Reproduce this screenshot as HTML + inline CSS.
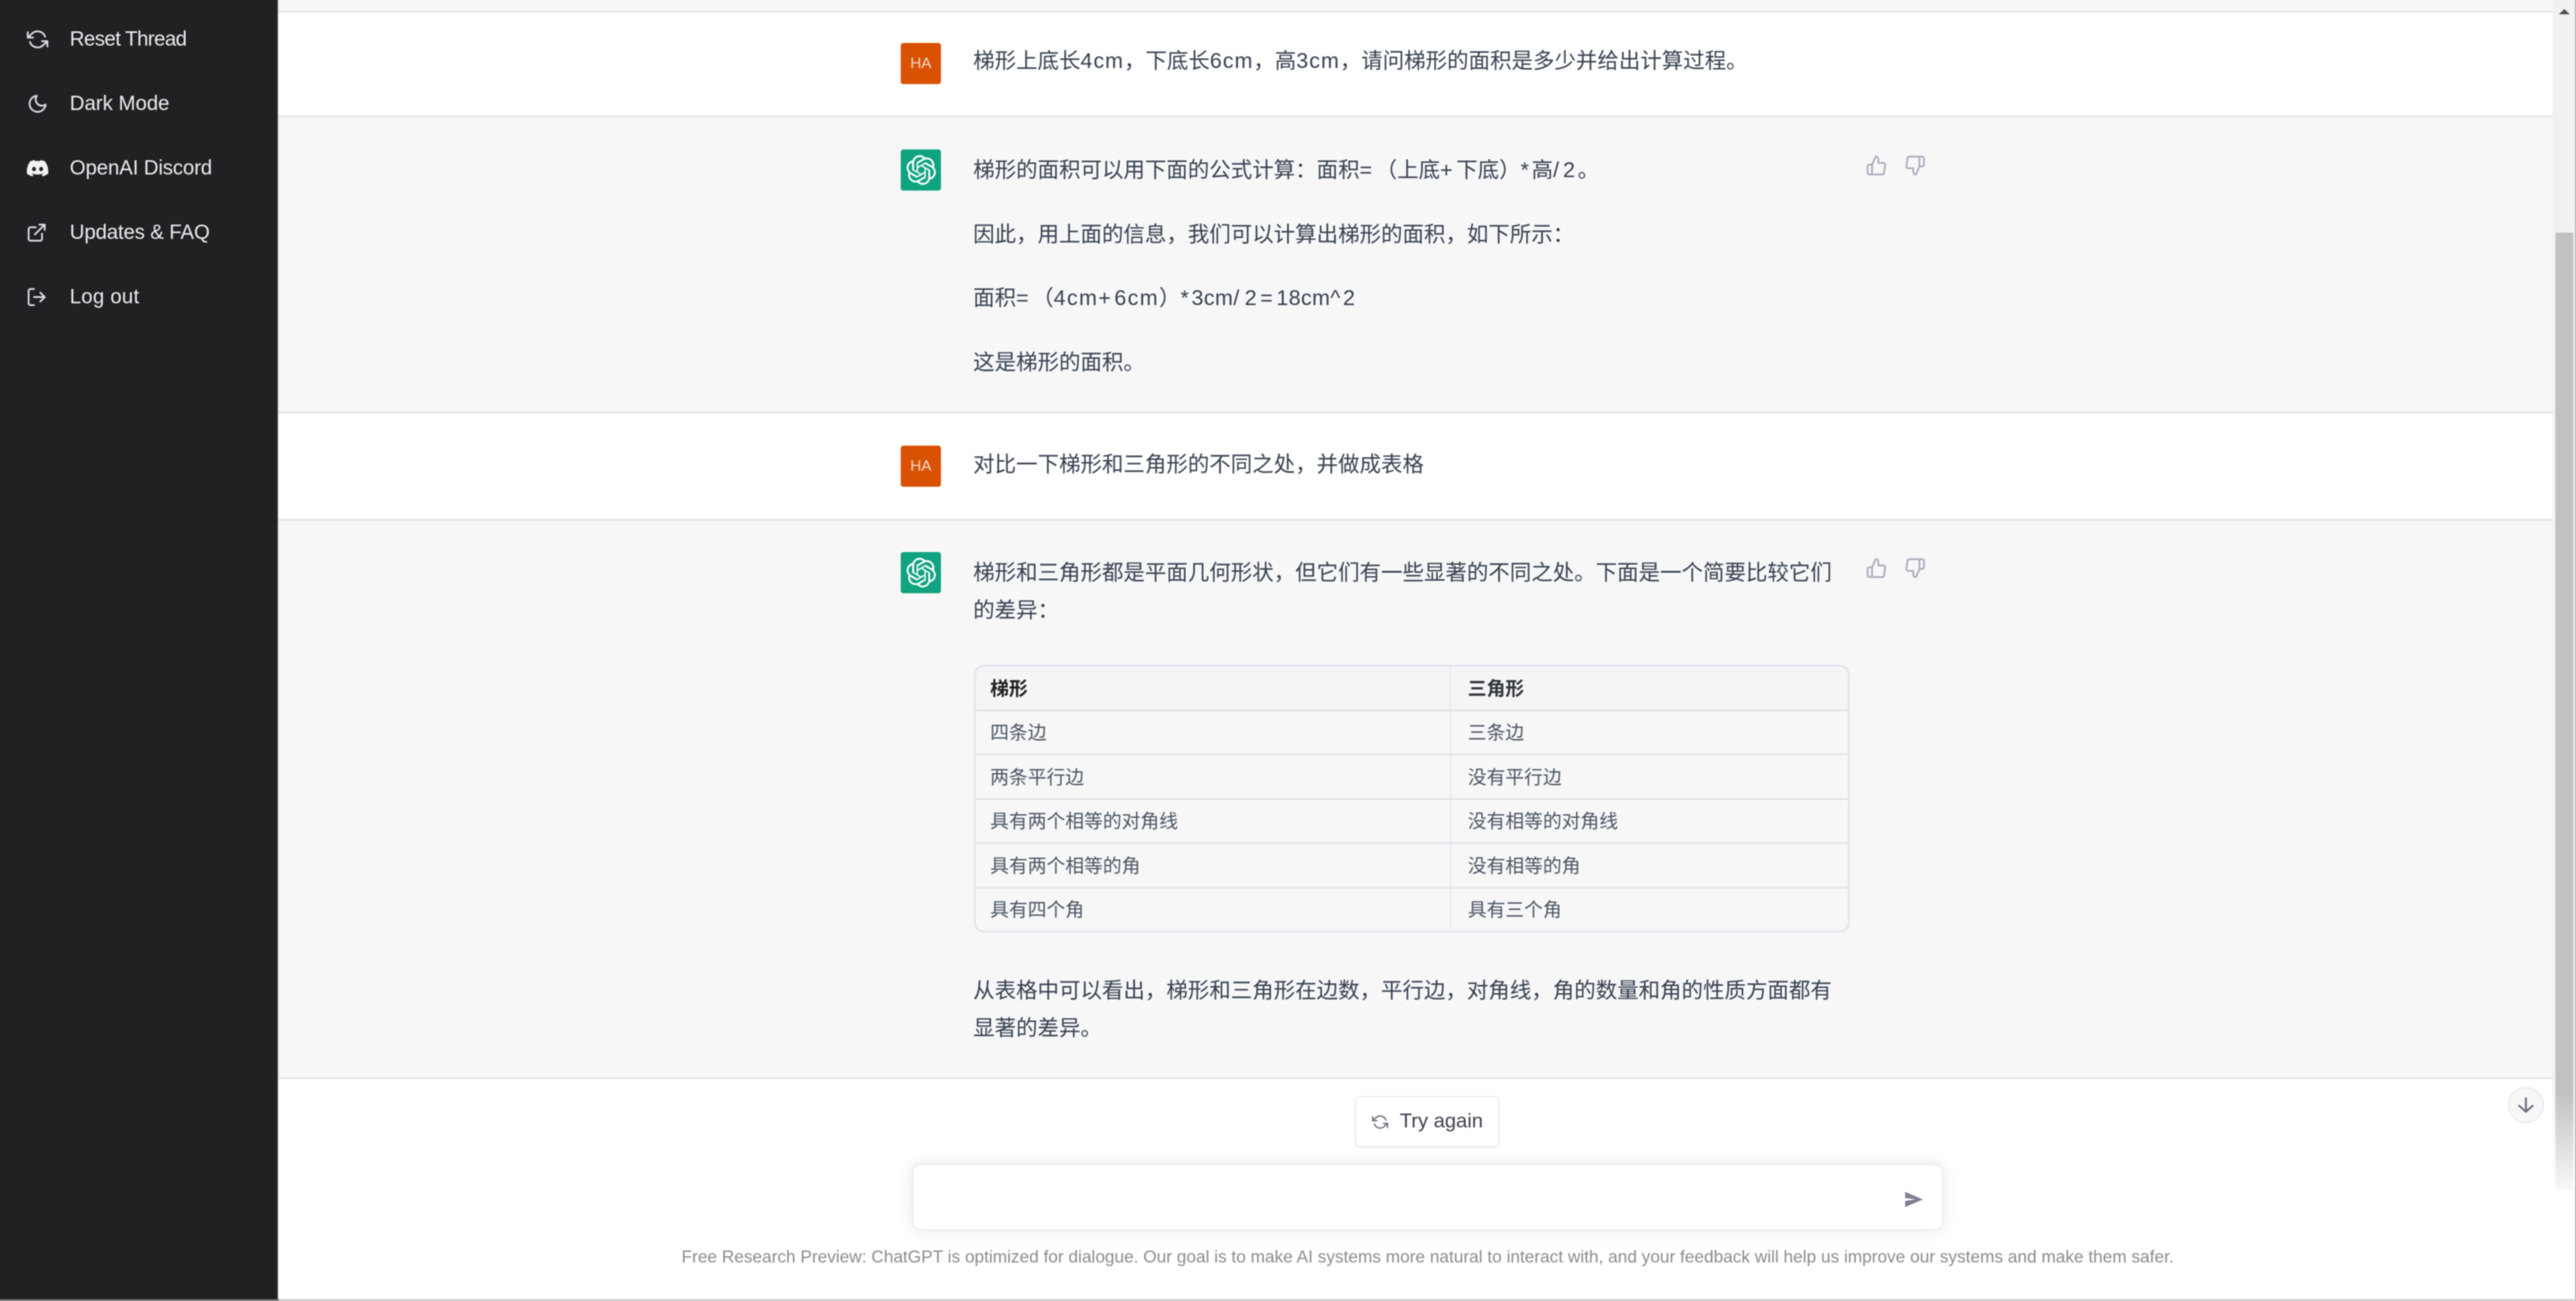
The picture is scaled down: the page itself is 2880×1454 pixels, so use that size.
<!DOCTYPE html>
<html><head><meta charset="utf-8"><title>ChatGPT</title>
<style>
html,body{margin:0;padding:0;width:2880px;height:1454px;overflow:hidden;background:#fff}
*{box-sizing:border-box}
body{position:relative;font-family:"Liberation Sans","Noto Sans CJK SC",sans-serif;color:#374151}
#w{position:absolute;left:-10px;top:-10px;width:2900px;height:1474px;background:#fff;filter:blur(.5px)}
#n{position:absolute;left:10px;top:10px;width:2880px;height:1454px}
.a{position:absolute}
.t{position:absolute;left:1088px;font-size:24px;line-height:42px;height:42px;white-space:nowrap;color:#374151}
.x{letter-spacing:1.5px}.y{letter-spacing:1.1px}.z{letter-spacing:.5px}.o{letter-spacing:4px}.k{letter-spacing:3px}.q{letter-spacing:6px}
.s{position:absolute;left:78px;font-size:22.8px;line-height:32px;height:32px;color:#ececf1;white-space:nowrap}
.i{position:absolute;fill:none;stroke:#d9d9e3;stroke-width:2;stroke-linecap:round;stroke-linejoin:round}
.av{position:absolute;left:1007px;width:45px;height:46px;border-radius:3px}
.u{background:#d95204;color:#f7dccb;font-size:17px;line-height:46px;text-align:center}
.g{background:#10a37f}
.c{position:absolute;font-size:21px;line-height:30px;height:30px;white-space:nowrap;color:#4b5563}
.hr{position:absolute;left:311px;width:2543px;height:2px;background:#e5e5e5}
.th{stroke:#acacbe;fill:none;stroke-width:2;stroke-linecap:round;stroke-linejoin:round;position:absolute}
.l{position:absolute;background:#e3e3ea}
</style></head><body><div id="w"><div id="n">

<!-- backgrounds -->
<div class="a" style="left:311px;top:-10px;width:2543px;height:22px;background:#f7f7f8"></div>
<div class="a" style="left:311px;top:130px;width:2543px;height:331px;background:#f7f7f8"></div>
<div class="a" style="left:311px;top:580px;width:2543px;height:625px;background:#f7f7f8"></div>
<div class="hr" style="top:12px"></div>
<div class="hr" style="top:129px"></div>
<div class="hr" style="top:460px"></div>
<div class="hr" style="top:580px"></div>
<div class="hr" style="top:1204px"></div>

<!-- sidebar -->
<div class="a" style="left:-10px;top:-10px;width:321px;height:1464px;background:#202123;border-right:1px solid #6b6b6b"></div>
<svg class="i" style="left:30px;top:32px" width="24" height="24" viewBox="0 0 24 24"><polyline points="1 4 1 10 7 10"/><polyline points="23 20 23 14 17 14"/><path d="M20.49 9A9 9 0 0 0 5.64 5.64L1 10m22 4l-4.64 4.36A9 9 0 0 1 3.51 15"/></svg>
<div class="s" style="top:27px;letter-spacing:-.6px">Reset Thread</div>
<svg class="i" style="left:30px;top:104px" width="24" height="24" viewBox="0 0 24 24"><path d="M21 12.79A9 9 0 1 1 11.21 3 7 7 0 0 0 21 12.79z"/></svg>
<div class="s" style="top:99px">Dark Mode</div>
<svg class="a" style="left:30px;top:176px" width="24" height="24" viewBox="0 0 24 24" fill="#f2f2f2"><path d="M20.317 4.3698a19.7913 19.7913 0 00-4.8851-1.5152.0741.0741 0 00-.0785.0371c-.211.3753-.4447.8648-.6083 1.2495-1.8447-.2762-3.68-.2762-5.4868 0-.1636-.3933-.4058-.8742-.6177-1.2495a.077.077 0 00-.0785-.037 19.7363 19.7363 0 00-4.8852 1.515.0699.0699 0 00-.0321.0277C.5334 9.0458-.319 13.5799.0992 18.0578a.0824.0824 0 00.0312.0561c2.0528 1.5076 4.0413 2.4228 5.9929 3.0294a.0777.0777 0 00.0842-.0276c.4616-.6304.8731-1.2952 1.226-1.9942a.076.076 0 00-.0416-.1057c-.6528-.2476-1.2743-.5495-1.8722-.8923a.077.077 0 01-.0076-.1277c.1258-.0943.2517-.1923.3718-.2914a.0743.0743 0 01.0776-.0105c3.9278 1.7933 8.18 1.7933 12.0614 0a.0739.0739 0 01.0785.0095c.1202.099.246.1981.3728.2924a.077.077 0 01-.0066.1276 12.2986 12.2986 0 01-1.873.8914.0766.0766 0 00-.0407.1067c.3604.698.7719 1.3628 1.225 1.9932a.076.076 0 00.0842.0286c1.961-.6067 3.9495-1.5219 6.0023-3.0294a.077.077 0 00.0313-.0552c.5004-5.177-.8382-9.6739-3.5485-13.6604a.061.061 0 00-.0312-.0286zM8.02 15.3312c-1.1825 0-2.1569-1.0857-2.1569-2.419 0-1.3332.9555-2.4189 2.157-2.4189 1.2108 0 2.1757 1.0952 2.1568 2.419 0 1.3332-.9555 2.4189-2.1569 2.4189zm7.9748 0c-1.1825 0-2.1569-1.0857-2.1569-2.419 0-1.3332.9554-2.4189 2.1569-2.4189 1.2108 0 2.1757 1.0952 2.1568 2.419 0 1.3332-.946 2.4189-2.1568 2.4189Z"/></svg>
<div class="s" style="top:171px;letter-spacing:-.13px">OpenAI Discord</div>
<svg class="i" style="left:29px;top:248px" width="24" height="24" viewBox="0 0 24 24"><path d="M18 13v6a2 2 0 0 1-2 2H5a2 2 0 0 1-2-2V8a2 2 0 0 1 2-2h6"/><polyline points="15 3 21 3 21 9"/><line x1="10" y1="14" x2="21" y2="3"/></svg>
<div class="s" style="top:243px;letter-spacing:-.15px">Updates &amp; FAQ</div>
<svg class="i" style="left:29px;top:320px" width="24" height="24" viewBox="0 0 24 24"><path d="M9 21H5a2 2 0 0 1-2-2V5a2 2 0 0 1 2-2h4"/><polyline points="16 17 21 12 16 7"/><line x1="21" y1="12" x2="9" y2="12"/></svg>
<div class="s" style="top:315px;letter-spacing:.25px">Log out</div>

<!-- avatars -->
<div class="av u" style="top:48px">HA</div>
<div class="av g" style="top:167px"><svg class="a" style="left:6px;top:6px" width="34" height="34" viewBox="0 0 41 41" fill="#fff"><path d="M37.5324 16.8707C37.9808 15.5241 38.1363 14.0974 37.9886 12.6859C37.8409 11.2744 37.3934 9.91076 36.676 8.68622C35.6126 6.83404 33.9882 5.3676 32.0373 4.4985C30.0864 3.62941 27.9098 3.40259 25.8215 3.85078C24.8796 2.7893 23.7219 1.94125 22.4257 1.36341C21.1295 0.785575 19.7249 0.491269 18.3058 0.500197C16.1708 0.495044 14.0893 1.16803 12.3614 2.42214C10.6335 3.67624 9.34853 5.44666 8.6917 7.47815C7.30085 7.76286 5.98686 8.3414 4.8377 9.17505C3.68854 10.0087 2.73073 11.0782 2.02839 12.312C0.956464 14.1591 0.498905 16.2988 0.721698 18.4228C0.944492 20.5467 1.83612 22.5449 3.268 24.1293C2.81966 25.4759 2.66413 26.9026 2.81182 28.3141C2.95951 29.7256 3.40701 31.0892 4.12437 32.3138C5.18791 34.1659 6.8123 35.6322 8.76321 36.5013C10.7141 37.3704 12.8907 37.5973 14.9789 37.1492C15.9208 38.2107 17.0786 39.0587 18.3747 39.6366C19.6709 40.2144 21.0755 40.5087 22.4946 40.4998C24.6307 40.5054 26.7133 39.8321 28.4418 38.5772C30.1704 37.3223 31.4556 35.5506 32.1119 33.5179C33.5027 33.2332 34.8167 32.6547 35.9659 31.821C37.115 30.9874 38.0728 29.9178 38.7752 28.684C39.8458 26.8371 40.3023 24.6979 40.0789 22.5748C39.8556 20.4517 38.9639 18.4544 37.5324 16.8707ZM22.4978 37.8849C20.7443 37.8874 19.0459 37.2733 17.6994 36.1501C17.7601 36.117 17.8666 36.0586 17.936 36.0161L25.9004 31.4156C26.1003 31.3019 26.2663 31.137 26.3813 30.9378C26.4964 30.7386 26.5563 30.5124 26.5549 30.2825V19.0542L29.9213 20.998C29.9389 21.0068 29.9541 21.0198 29.9656 21.0359C29.977 21.052 29.9842 21.0707 29.9867 21.0902V30.3889C29.9842 32.375 29.1946 34.2791 27.7909 35.6841C26.3872 37.0892 24.4838 37.8806 22.4978 37.8849ZM6.39227 31.0064C5.51397 29.4888 5.19742 27.7107 5.49804 25.9832C5.55718 26.0187 5.66048 26.0818 5.73461 26.1244L13.699 30.7248C13.8975 30.8408 14.1233 30.902 14.3532 30.902C14.583 30.902 14.8088 30.8408 15.0073 30.7248L24.731 25.1103V28.9979C24.7321 29.0177 24.7283 29.0376 24.7199 29.0556C24.7115 29.0736 24.6988 29.0893 24.6829 29.1012L16.6317 33.7497C14.9096 34.7416 12.8643 35.0097 10.9447 34.4954C9.02506 33.9811 7.38785 32.7263 6.39227 31.0064ZM4.29707 13.6194C5.17156 12.0998 6.55279 10.9364 8.19885 10.3327C8.19885 10.4013 8.19491 10.5228 8.19491 10.6071V19.808C8.19351 20.0378 8.25334 20.2638 8.36823 20.4629C8.48312 20.6619 8.64893 20.8267 8.84863 20.9404L18.5723 26.5542L15.206 28.4979C15.1894 28.5089 15.1703 28.5155 15.1505 28.5173C15.1307 28.5191 15.1107 28.516 15.0924 28.5082L7.04046 23.8557C5.32135 22.8601 4.06716 21.2235 3.55289 19.3046C3.03862 17.3858 3.30624 15.3413 4.29707 13.6194ZM31.955 20.0556L22.2312 14.4411L25.5976 12.4981C25.6142 12.4872 25.6333 12.4805 25.6531 12.4787C25.6729 12.4769 25.6928 12.4801 25.7111 12.4879L33.7631 17.1364C34.9967 17.849 36.0017 18.8982 36.6606 20.1613C37.3194 21.4244 37.6047 22.849 37.4832 24.2684C37.3617 25.6878 36.8382 27.0432 35.9743 28.1759C35.1103 29.3086 33.9415 30.1717 32.6047 30.6641C32.6047 30.5947 32.6047 30.4733 32.6047 30.3889V21.188C32.6066 20.9586 32.5474 20.7328 32.4332 20.5338C32.319 20.3348 32.154 20.1698 31.955 20.0556ZM35.3055 15.0128C35.2464 14.9765 35.1431 14.9142 35.069 14.8717L27.1045 10.2712C26.906 10.1554 26.6803 10.0943 26.4504 10.0943C26.2206 10.0943 25.9948 10.1554 25.7963 10.2712L16.0726 15.8858V11.9982C16.0715 11.9783 16.0753 11.9585 16.0837 11.9405C16.0921 11.9225 16.1048 11.9068 16.1207 11.8949L24.1719 7.25025C25.4053 6.53903 26.8158 6.19376 28.2383 6.25482C29.6608 6.31589 31.0364 6.78077 32.2044 7.59508C33.3723 8.40939 34.2842 9.53945 34.8334 10.8531C35.3826 12.1667 35.5464 13.6095 35.3055 15.0128ZM14.2424 21.9419L10.8752 19.9981C10.8576 19.9893 10.8423 19.9763 10.8309 19.9602C10.8195 19.9441 10.8122 19.9254 10.8098 19.9058V10.6071C10.8107 9.18295 11.2173 7.78848 11.9819 6.58696C12.7466 5.38544 13.8377 4.42659 15.1275 3.82264C16.4173 3.21869 17.8524 2.99464 19.2649 3.1767C20.6775 3.35876 22.0089 3.93941 23.1034 4.85067C23.0427 4.88379 22.937 4.94215 22.8668 4.98473L14.9024 9.58517C14.7025 9.69878 14.5366 9.86356 14.4215 10.0626C14.3065 10.2616 14.2466 10.4877 14.2479 10.7175L14.2424 21.9419ZM16.071 17.9991L20.4018 15.4978L24.7325 17.9975V22.9985L20.4018 25.4983L16.071 22.9985V17.9991Z"/></svg></div>
<div class="av u" style="top:498px">HA</div>
<div class="av g" style="top:617px"><svg class="a" style="left:6px;top:6px" width="34" height="34" viewBox="0 0 41 41" fill="#fff"><path d="M37.5324 16.8707C37.9808 15.5241 38.1363 14.0974 37.9886 12.6859C37.8409 11.2744 37.3934 9.91076 36.676 8.68622C35.6126 6.83404 33.9882 5.3676 32.0373 4.4985C30.0864 3.62941 27.9098 3.40259 25.8215 3.85078C24.8796 2.7893 23.7219 1.94125 22.4257 1.36341C21.1295 0.785575 19.7249 0.491269 18.3058 0.500197C16.1708 0.495044 14.0893 1.16803 12.3614 2.42214C10.6335 3.67624 9.34853 5.44666 8.6917 7.47815C7.30085 7.76286 5.98686 8.3414 4.8377 9.17505C3.68854 10.0087 2.73073 11.0782 2.02839 12.312C0.956464 14.1591 0.498905 16.2988 0.721698 18.4228C0.944492 20.5467 1.83612 22.5449 3.268 24.1293C2.81966 25.4759 2.66413 26.9026 2.81182 28.3141C2.95951 29.7256 3.40701 31.0892 4.12437 32.3138C5.18791 34.1659 6.8123 35.6322 8.76321 36.5013C10.7141 37.3704 12.8907 37.5973 14.9789 37.1492C15.9208 38.2107 17.0786 39.0587 18.3747 39.6366C19.6709 40.2144 21.0755 40.5087 22.4946 40.4998C24.6307 40.5054 26.7133 39.8321 28.4418 38.5772C30.1704 37.3223 31.4556 35.5506 32.1119 33.5179C33.5027 33.2332 34.8167 32.6547 35.9659 31.821C37.115 30.9874 38.0728 29.9178 38.7752 28.684C39.8458 26.8371 40.3023 24.6979 40.0789 22.5748C39.8556 20.4517 38.9639 18.4544 37.5324 16.8707ZM22.4978 37.8849C20.7443 37.8874 19.0459 37.2733 17.6994 36.1501C17.7601 36.117 17.8666 36.0586 17.936 36.0161L25.9004 31.4156C26.1003 31.3019 26.2663 31.137 26.3813 30.9378C26.4964 30.7386 26.5563 30.5124 26.5549 30.2825V19.0542L29.9213 20.998C29.9389 21.0068 29.9541 21.0198 29.9656 21.0359C29.977 21.052 29.9842 21.0707 29.9867 21.0902V30.3889C29.9842 32.375 29.1946 34.2791 27.7909 35.6841C26.3872 37.0892 24.4838 37.8806 22.4978 37.8849ZM6.39227 31.0064C5.51397 29.4888 5.19742 27.7107 5.49804 25.9832C5.55718 26.0187 5.66048 26.0818 5.73461 26.1244L13.699 30.7248C13.8975 30.8408 14.1233 30.902 14.3532 30.902C14.583 30.902 14.8088 30.8408 15.0073 30.7248L24.731 25.1103V28.9979C24.7321 29.0177 24.7283 29.0376 24.7199 29.0556C24.7115 29.0736 24.6988 29.0893 24.6829 29.1012L16.6317 33.7497C14.9096 34.7416 12.8643 35.0097 10.9447 34.4954C9.02506 33.9811 7.38785 32.7263 6.39227 31.0064ZM4.29707 13.6194C5.17156 12.0998 6.55279 10.9364 8.19885 10.3327C8.19885 10.4013 8.19491 10.5228 8.19491 10.6071V19.808C8.19351 20.0378 8.25334 20.2638 8.36823 20.4629C8.48312 20.6619 8.64893 20.8267 8.84863 20.9404L18.5723 26.5542L15.206 28.4979C15.1894 28.5089 15.1703 28.5155 15.1505 28.5173C15.1307 28.5191 15.1107 28.516 15.0924 28.5082L7.04046 23.8557C5.32135 22.8601 4.06716 21.2235 3.55289 19.3046C3.03862 17.3858 3.30624 15.3413 4.29707 13.6194ZM31.955 20.0556L22.2312 14.4411L25.5976 12.4981C25.6142 12.4872 25.6333 12.4805 25.6531 12.4787C25.6729 12.4769 25.6928 12.4801 25.7111 12.4879L33.7631 17.1364C34.9967 17.849 36.0017 18.8982 36.6606 20.1613C37.3194 21.4244 37.6047 22.849 37.4832 24.2684C37.3617 25.6878 36.8382 27.0432 35.9743 28.1759C35.1103 29.3086 33.9415 30.1717 32.6047 30.6641C32.6047 30.5947 32.6047 30.4733 32.6047 30.3889V21.188C32.6066 20.9586 32.5474 20.7328 32.4332 20.5338C32.319 20.3348 32.154 20.1698 31.955 20.0556ZM35.3055 15.0128C35.2464 14.9765 35.1431 14.9142 35.069 14.8717L27.1045 10.2712C26.906 10.1554 26.6803 10.0943 26.4504 10.0943C26.2206 10.0943 25.9948 10.1554 25.7963 10.2712L16.0726 15.8858V11.9982C16.0715 11.9783 16.0753 11.9585 16.0837 11.9405C16.0921 11.9225 16.1048 11.9068 16.1207 11.8949L24.1719 7.25025C25.4053 6.53903 26.8158 6.19376 28.2383 6.25482C29.6608 6.31589 31.0364 6.78077 32.2044 7.59508C33.3723 8.40939 34.2842 9.53945 34.8334 10.8531C35.3826 12.1667 35.5464 13.6095 35.3055 15.0128ZM14.2424 21.9419L10.8752 19.9981C10.8576 19.9893 10.8423 19.9763 10.8309 19.9602C10.8195 19.9441 10.8122 19.9254 10.8098 19.9058V10.6071C10.8107 9.18295 11.2173 7.78848 11.9819 6.58696C12.7466 5.38544 13.8377 4.42659 15.1275 3.82264C16.4173 3.21869 17.8524 2.99464 19.2649 3.1767C20.6775 3.35876 22.0089 3.93941 23.1034 4.85067C23.0427 4.88379 22.937 4.94215 22.8668 4.98473L14.9024 9.58517C14.7025 9.69878 14.5366 9.86356 14.4215 10.0626C14.3065 10.2616 14.2466 10.4877 14.2479 10.7175L14.2424 21.9419ZM16.071 17.9991L20.4018 15.4978L24.7325 17.9975V22.9985L20.4018 25.4983L16.071 22.9985V17.9991Z"/></svg></div>

<!-- messages -->
<div class="t" style="top:48px">梯形上底长<span class="y">4cm</span>，下底长<span class="y">6cm</span>，高<span class="y">3cm</span>，请问梯形的面积是多少并给出计算过程。</div>
<div class="t" style="top:170px">梯形的面积可以用下面的公式计算：面积<span class="o">=</span>（上底<span class="o">+</span>下底）<span class="k">*</span>高<span style="letter-spacing:4.5px">/</span><span class="k">2</span>。</div>
<div class="t" style="top:242px">因此，用上面的信息，我们可以计算出梯形的面积，如下所示：</div>
<div class="t" style="top:313px">面积<span class="o">=</span>（<span class="x">4cm</span><span class="o">+</span><span class="x">6cm</span>）<span class="k">*</span><span class="z">3cm</span><span class="q">/</span><span class="o">2=</span><span style="letter-spacing:.4px">18cm</span><span class="k">^</span>2</div>
<div class="t" style="top:385px">这是梯形的面积。</div>
<div class="t" style="top:499px">对比一下梯形和三角形的不同之处，并做成表格</div>
<div class="t" style="top:620px">梯形和三角形都是平面几何形状，但它们有一些显著的不同之处。下面是一个简要比较它们</div>
<div class="t" style="top:662px">的差异：</div>
<div class="t" style="top:1087px">从表格中可以看出，梯形和三角形在边数，平行边，对角线，角的数量和角的性质方面都有</div>
<div class="t" style="top:1129px">显著的差异。</div>

<!-- thumbs -->
<svg class="th" style="left:2086px;top:173px" width="24" height="24" viewBox="0 0 24 24"><path d="M14 9V5a3 3 0 0 0-3-3l-4 9v11h11.28a2 2 0 0 0 2-1.7l1.38-9a2 2 0 0 0-2-2.3zM7 22H4a2 2 0 0 1-2-2v-7a2 2 0 0 1 2-2h3"/></svg>
<svg class="th" style="left:2129px;top:173px" width="24" height="24" viewBox="0 0 24 24"><path d="M10 15v4a3 3 0 0 0 3 3l4-9V2H5.72a2 2 0 0 0-2 1.7l-1.38 9a2 2 0 0 0 2 2.3zm7-13h2.67A2.31 2.31 0 0 1 22 4v7a2.31 2.31 0 0 1-2.33 2H17"/></svg>
<svg class="th" style="left:2086px;top:623px" width="24" height="24" viewBox="0 0 24 24"><path d="M14 9V5a3 3 0 0 0-3-3l-4 9v11h11.28a2 2 0 0 0 2-1.7l1.38-9a2 2 0 0 0-2-2.3zM7 22H4a2 2 0 0 1-2-2v-7a2 2 0 0 1 2-2h3"/></svg>
<svg class="th" style="left:2129px;top:623px" width="24" height="24" viewBox="0 0 24 24"><path d="M10 15v4a3 3 0 0 0 3 3l4-9V2H5.72a2 2 0 0 0-2 1.7l-1.38 9a2 2 0 0 0 2 2.3zm7-13h2.67A2.31 2.31 0 0 1 22 4v7a2.31 2.31 0 0 1-2.33 2H17"/></svg>

<!-- table -->
<div class="a" style="left:1091px;top:745px;width:975px;height:48px;background:#f5f5f6;border-radius:9px 9px 0 0"></div>
<div class="a" style="left:1089px;top:743px;width:979px;height:299px;border:2px solid #e3e3ea;border-radius:11px"></div>
<div class="l" style="left:1621px;top:744px;width:1px;height:297px"></div>
<div class="l" style="left:1090px;top:793px;width:977px;height:2px"></div>
<div class="l" style="left:1090px;top:842px;width:977px;height:2px"></div>
<div class="l" style="left:1090px;top:892px;width:977px;height:2px"></div>
<div class="l" style="left:1090px;top:941px;width:977px;height:2px"></div>
<div class="l" style="left:1090px;top:991px;width:977px;height:2px"></div>
<div class="c" style="left:1107px;top:756px;font-weight:700;color:#202123">梯形</div>
<div class="c" style="left:1641px;top:756px;font-weight:700;color:#30343c">三角形</div>
<div class="c" style="left:1107px;top:805px">四条边</div><div class="c" style="left:1641px;top:805px">三条边</div>
<div class="c" style="left:1107px;top:855px">两条平行边</div><div class="c" style="left:1641px;top:855px">没有平行边</div>
<div class="c" style="left:1107px;top:904px">具有两个相等的对角线</div><div class="c" style="left:1641px;top:904px">没有相等的对角线</div>
<div class="c" style="left:1107px;top:954px">具有两个相等的角</div><div class="c" style="left:1641px;top:954px">没有相等的角</div>
<div class="c" style="left:1107px;top:1003px">具有四个角</div><div class="c" style="left:1641px;top:1003px">具有三个角</div>

<!-- scrollbar -->
<div class="a" style="left:2854px;top:-10px;width:25px;height:1464px;background:linear-gradient(#f1f1f1 0,#f1f1f1 1215px,#fff 1340px)"></div>
<div class="a" style="left:2857px;top:260px;width:20px;height:1070px;background:linear-gradient(#c1c1c1 0,#c1c1c1 960px,#f8f8f8 1070px)"></div>
<div class="a" style="left:2861px;top:10px;width:0;height:0;border-left:6px solid transparent;border-right:6px solid transparent;border-bottom:6px solid #505050"></div>
<div class="a" style="left:2879px;top:-10px;width:1px;height:1464px;background:#9a9a9a"></div>
<div class="a" style="left:0;top:1452px;width:2890px;height:2px;background:#c9c9c9"></div>
<div class="a" style="left:-10px;top:1452px;width:322px;height:2px;background:#707070"></div>

<!-- scroll down -->
<div class="a" style="left:2804px;top:1215px;width:40px;height:40px;border-radius:50%;background:#f7f7f8;border:1.5px solid #e2e2ea"></div>
<svg class="a" style="left:2814px;top:1225px" width="20" height="20" viewBox="0 0 24 24" fill="none" stroke="#6b6c7b" stroke-width="2.6" stroke-linecap="round" stroke-linejoin="round"><line x1="12" y1="3" x2="12" y2="21"/><polyline points="21 13 12 21 3 13"/></svg>

<!-- try again -->
<div class="a" style="left:1515px;top:1225px;width:161px;height:57px;background:#fff;border:1.5px solid #e6e6ec;border-radius:5px;box-shadow:0 1px 2px rgba(0,0,0,.06)"></div>
<svg class="a" style="left:1534px;top:1245px" width="18" height="18" viewBox="0 0 24 24" fill="none" stroke="#6b6c7b" stroke-width="2" stroke-linecap="round" stroke-linejoin="round"><polyline points="1 4 1 10 7 10"/><polyline points="23 20 23 14 17 14"/><path d="M20.49 9A9 9 0 0 0 5.64 5.64L1 10m22 4l-4.64 4.36A9 9 0 0 1 3.51 15"/></svg>
<div class="a" style="left:1565px;top:1237px;font-size:22.5px;line-height:32px;white-space:nowrap;color:#40414f">Try again</div>

<!-- input -->
<div class="a" style="left:1020px;top:1301px;width:1152px;height:74px;background:#fff;border:1.5px solid #e8e8ec;border-radius:9px;box-shadow:0 0 18px rgba(0,0,0,.10)"></div>
<svg class="a" style="left:2129px;top:1330px" width="21" height="21" viewBox="0 0 24 24" fill="#7f7f92"><path d="M1.101 21.757 23.8 12.028 1.101 2.3l.011 7.912 13.623 1.816-13.623 1.817-.011 7.912z"/></svg>

<!-- footer -->
<div class="a" style="left:762px;top:1391px;width:1800px;font-size:19.3px;line-height:30px;white-space:nowrap;color:#8c8c90">Free Research Preview: ChatGPT is optimized for dialogue. Our goal is to make AI systems more natural to interact with, and your feedback will help us improve our systems and make them safer.</div>

</div></div></body></html>
